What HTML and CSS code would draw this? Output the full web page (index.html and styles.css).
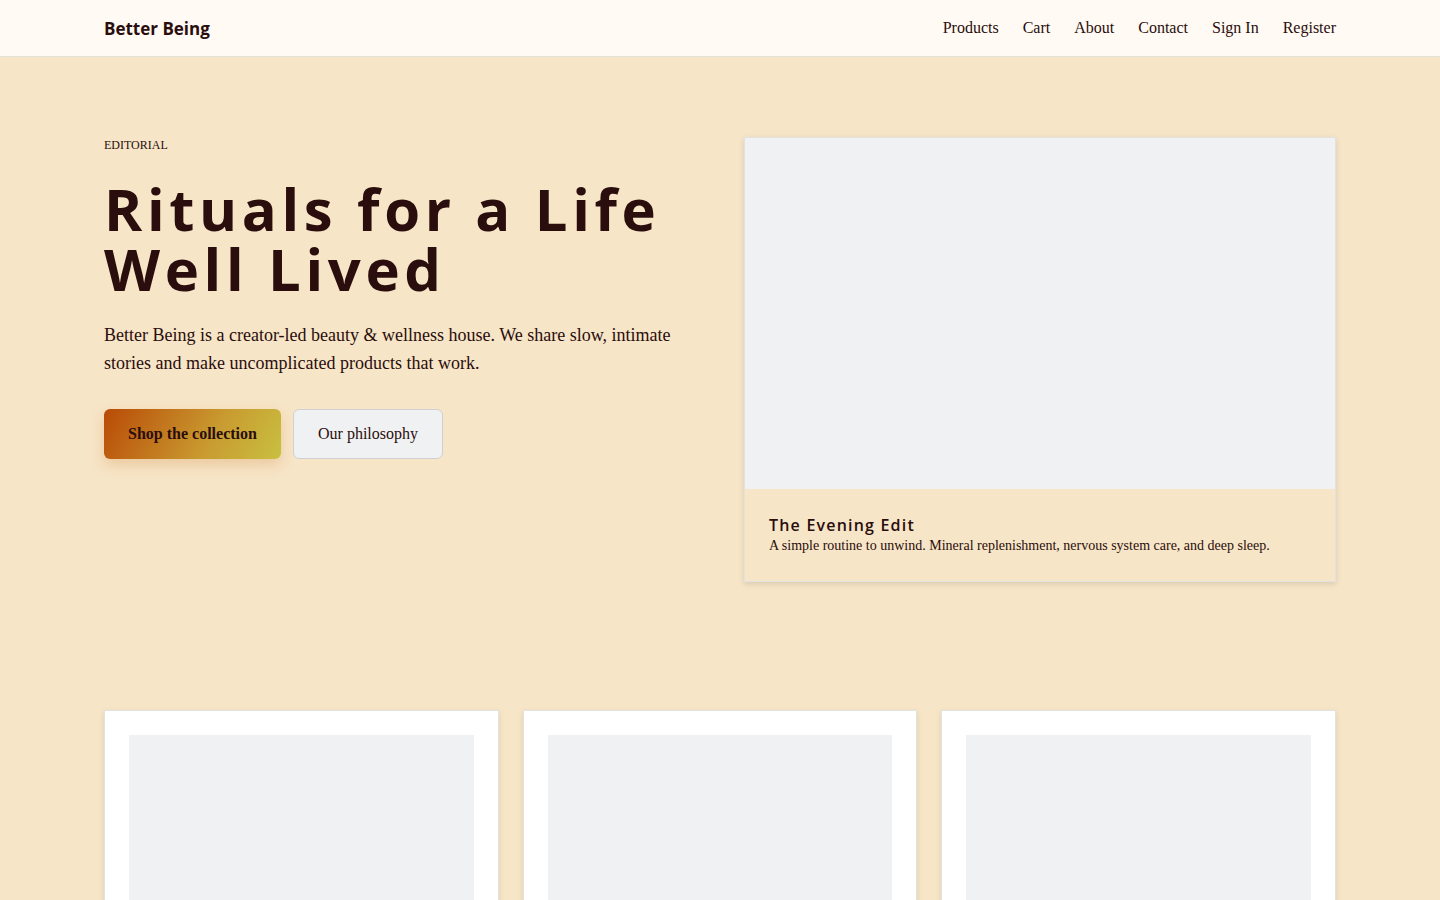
FILE: index.html
```html
<!DOCTYPE html>
<html lang="en">
<head>
<meta charset="utf-8">
<title>Better Being</title>
<link rel="stylesheet" href="styles.css">
</head>
<body>
<header class="site-header">
  <div class="container header-inner">
    <a class="logo" href="#">Better Being</a>
    <nav class="nav">
      <a href="#">Products</a>
      <a href="#">Cart</a>
      <a href="#">About</a>
      <a href="#">Contact</a>
      <a href="#">Sign In</a>
      <a href="#">Register</a>
    </nav>
  </div>
</header>
<main>
  <section class="hero container">
    <div class="hero-text">
      <p class="eyebrow">EDITORIAL</p>
      <h1 class="hero-title">Rituals for a Life Well Lived</h1>
      <p class="hero-lead">Better Being is a creator-led beauty &amp; wellness house. We share slow, intimate stories and make uncomplicated products that work.</p>
      <div class="actions">
        <a class="btn btn-primary" href="#">Shop the collection</a>
        <a class="btn btn-secondary" href="#">Our philosophy</a>
      </div>
    </div>
    <figure class="feature-card">
      <div class="feature-image"></div>
      <figcaption class="feature-caption">
        <h2 class="feature-title">The Evening Edit</h2>
        <p class="feature-desc">A simple routine to unwind. Mineral replenishment, nervous system care, and deep sleep.</p>
      </figcaption>
    </figure>
  </section>
  <section class="cards container">
    <article class="card"><div class="card-image"></div></article>
    <article class="card"><div class="card-image"></div></article>
    <article class="card"><div class="card-image"></div></article>
  </section>
</main>
</body>
</html>
```
FILE: styles.css
```css
* { box-sizing: border-box; }
html, body { margin: 0; padding: 0; }
body {
  background: #f7e5c7;
  color: #2a0d0d;
  font-family: "Liberation Serif", "Times New Roman", serif;
}
a { color: inherit; text-decoration: none; }
.container {
  width: 1232px;
  margin: 0 auto;
}
.site-header {
  background: #fffaf3;
  border-bottom: 1px solid #e3e1dc;
  height: 57px;
}
.header-inner {
  height: 56px;
  display: flex;
  align-items: center;
  justify-content: space-between;
}
.logo {
  font-family: "Open Sans", "Noto Sans", sans-serif;
  font-weight: 700;
  font-size: 17px;
  color: #2a0d0d;
}
.nav {
  display: flex;
  gap: 24px;
  font-size: 16px;
}
.hero {
  display: grid;
  grid-template-columns: 1fr 592px;
  gap: 48px;
  align-items: start;
  padding-top: 80px;
}
.eyebrow {
  margin: 0;
  font-size: 12px;
  line-height: 16px;
}
.hero-title {
  margin: 26px 0 0;
  font-family: "Open Sans", "Noto Sans", sans-serif;
  font-weight: 700;
  font-size: 58px;
  line-height: 60px;
  letter-spacing: 0.08em;
}
.hero-lead {
  margin: 22px 0 0;
  font-size: 18px;
  line-height: 28px;
  max-width: 580px;
}
.actions {
  margin-top: 32px;
  display: flex;
  gap: 12px;
}
.btn {
  display: inline-flex;
  align-items: center;
  justify-content: center;
  height: 50px;
  border-radius: 6px;
  font-size: 16px;
}
.btn-primary {
  width: 177px;
  font-weight: 700;
  background: linear-gradient(120deg, #b94a06 0%, #c99a30 60%, #c8c040 100%);
  box-shadow: 0 6px 14px rgba(200, 120, 40, 0.25);
}
.btn-secondary {
  width: 150px;
  background: #f0f1f3;
  border: 1px solid #cfd0d2;
}
.feature-card {
  margin: 0;
  background: #f7e5c7;
  border: 1px solid #e2e2e0;
  box-shadow: 0 2px 6px rgba(0, 0, 0, 0.12);
}
.feature-image {
  height: 351px;
  background: #f0f1f3;
}
.feature-caption {
  padding: 26px 24px 25px;
}
.feature-title {
  margin: 0;
  font-family: "Open Sans", "Noto Sans", sans-serif;
  font-weight: 600;
  font-size: 16px;
  line-height: 20px;
  letter-spacing: 0.075em;
}
.feature-desc {
  margin: 1px 0 0;
  font-size: 14px;
  line-height: 20px;
}
.cards {
  display: grid;
  grid-template-columns: repeat(3, 1fr);
  gap: 24px;
  margin-top: 128px;
  padding-bottom: 40px;
}
.card {
  background: #fff;
  border: 1px solid #e2e2e0;
  box-shadow: 0 2px 6px rgba(0, 0, 0, 0.1);
  padding: 24px;
}
.card-image {
  height: 300px;
  background: #f0f1f3;
}
```
